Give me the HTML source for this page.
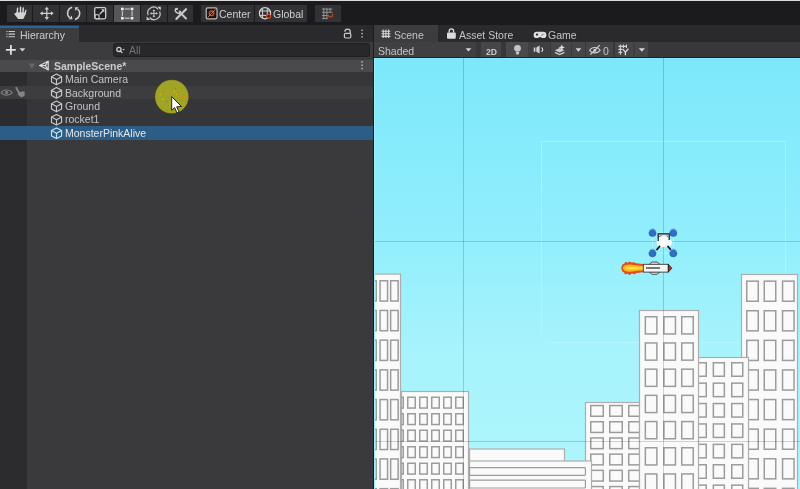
<!DOCTYPE html>
<html><head><meta charset="utf-8">
<style>
*{margin:0;padding:0;box-sizing:border-box}
html,body{width:800px;height:489px;overflow:hidden;background:#1b1a1d;font-family:"Liberation Sans",sans-serif;color:#c4c4c4}
.a{position:absolute}
.tb{position:absolute;top:5px;height:17px;background:#323134}
.tb.on{background:#575659}
.t{position:absolute;white-space:nowrap;font-size:10.5px;line-height:12px;letter-spacing:0;will-change:transform}
svg{position:absolute;overflow:visible}
</style></head><body>
<div class="a" style="left:0;top:0;width:800px;height:1px;background:#dcdcdc"></div>

<!-- ===== main toolbar ===== -->
<div class="tb" style="left:7px;width:25px"></div>
<div class="tb" style="left:33px;width:26px"></div>
<div class="tb" style="left:60px;width:26px"></div>
<div class="tb" style="left:87px;width:26px"></div>
<div class="tb on" style="left:114px;width:26px"></div>
<div class="tb" style="left:141px;width:26px"></div>
<div class="tb" style="left:168px;width:25px"></div>
<div class="tb" style="left:201px;width:53px"></div>
<div class="tb" style="left:255px;width:52px"></div>
<div class="tb" style="left:315px;width:26px"></div>

<svg width="800" height="25" style="left:0;top:0">
<g fill="#d6d6d6" stroke="none">
<!-- hand -->
<path d="M17.2 13 L17.6 8.2 M20.5 12.6 V7.2 M23 12.8 L23.2 8 M24.9 14 L25.8 10.6" stroke="#d4d4d4" stroke-width="1.5" stroke-linecap="round"/>
<path d="M16.4 12.2 L25.4 12.6 L25.6 14.2 L24.2 17.2 L23.2 18.9 L18.2 18.9 L14.6 14.4 C14.2 13.6,14.8 12.8,15.6 13.2Z" fill="#d4d4d4"/>
<!-- move -->
<path d="M46.8 9v9M42 13.35h9.5" stroke="#cfcfcf" stroke-width="1.2"/>
<path d="M46.8 6.8 L49 9.6 H44.6Z M46.8 20 L49 17.1 H44.6Z M39.9 13.35 L42.7 11.2 V15.5Z M53.7 13.35 L50.9 11.2 V15.5Z" fill="#cfcfcf"/>
<!-- rotate -->
<path d="M72.2 7.3 A6 6 0 0 0 69.6 17.6" fill="none" stroke="#cdcdcd" stroke-width="1.5"/>
<path d="M75 19.4 A6 6 0 0 0 77.6 9" fill="none" stroke="#cdcdcd" stroke-width="1.5"/>
<path d="M68.6 19.3 L72.4 19.3 L71.8 15.6Z" fill="#cdcdcd"/>
<path d="M78.6 7.3 L74.8 7.3 L75.4 11Z" fill="#cdcdcd"/>
<!-- scale -->
<rect x="94.7" y="7.6" width="11" height="11.2" rx="1.5" fill="#202020" stroke="#cfcfcf" stroke-width="1.3"/>
<rect x="95.2" y="14.8" width="3.8" height="3.8" fill="#111" stroke="#cfcfcf" stroke-width="1.1"/>
<path d="M99.8 14 L103.6 10.2" stroke="#cfcfcf" stroke-width="1.3"/>
<path d="M104.4 9.3 V12.6 L101.1 9.3Z" fill="#cfcfcf"/>
<!-- rect -->
<g fill="#f0f0f0"><rect x="121" y="7.7" width="2.7" height="2.6"/><rect x="130.7" y="7.7" width="2.7" height="2.6"/><rect x="121" y="16.9" width="2.7" height="2.6"/><rect x="130.7" y="16.9" width="2.7" height="2.6"/></g>
<path d="M124.6 9h5.2M124.6 18.2h5.2M122.35 11.2v4.8M132.05 11.2v4.8" stroke="#d8d8d8" stroke-width="1"/>
<!-- transform -->
<path d="M158.2 9.3 A5.9 5.9 0 0 0 148.2 15.3 M149.6 17.5 A5.9 5.9 0 0 0 159.6 11.5" fill="none" stroke="#c8c8c8" stroke-width="1.2"/>
<path d="M153.9 10.3v6.2M150.8 13.4h6.2" stroke="#c8c8c8" stroke-width="1"/>
<path d="M153.9 9.4 L155.3 11 H152.5Z M153.9 17.4 L155.3 15.8 H152.5Z M149.9 13.4 L151.5 12 V14.8Z M157.9 13.4 L156.3 12 V14.8Z" fill="#c8c8c8"/>
<path d="M160.8 6.8 V10.3 L157.3 6.8Z M146.6 20 V16.5 L150.1 20Z" fill="#d0d0d0"/>
<!-- custom tools -->
<path d="M176.5 18.8 L186 9.2" stroke="#c8c8c8" stroke-width="2.2" stroke-linecap="round"/>
<path d="M175.5 19.8 L176.2 17.5 L177.8 19.1Z" fill="#c8c8c8"/>
<path d="M179.5 12 L186 18.5" stroke="#c8c8c8" stroke-width="2" stroke-linecap="round"/>
<path d="M176.2 8.3 A2.8 2.8 0 0 0 180.7 12.3 M176.5 8 L177.8 9.5 M180.9 12 L179.4 10.7" fill="none" stroke="#c8c8c8" stroke-width="1.4"/>
<!-- center icon -->
<rect x="206.2" y="7.8" width="10.8" height="11" rx="1.6" fill="#1a1412" stroke="#bcbcbc" stroke-width="1.2"/>
<circle cx="211.6" cy="13.3" r="2.3" fill="none" stroke="#d9461f" stroke-width="1.4"/>
<path d="M207.8 17.2 L215.5 9.4" stroke="#c9a080" stroke-width="0.8"/>
<!-- global icon -->
<circle cx="265" cy="13.2" r="5.6" fill="none" stroke="#d8d8d8" stroke-width="1.2"/>
<path d="M259.6 11h10.8M259.6 15.4h10.8M262.6 7.8v10.8M267.3 7.8v10.8" stroke="#cfcfcf" stroke-width="1"/>
<circle cx="268.6" cy="16.2" r="1.9" fill="#2a1a14" stroke="#e14d1f" stroke-width="1.2"/>
<!-- snap grid -->
<path d="M322 9.1h10.4M322 12.3h10.4M322 15.5h5.5M322 18.5h5.5M323.8 7.8v11.4M326.9 7.8v11.4M330 7.8v4.5" stroke="#9a9a9a" stroke-width="0.9"/>
<path d="M328.5 15 A2 2 0 0 0 332.5 15 V13.8" fill="none" stroke="#c8421f" stroke-width="1.2"/>
</g>
</svg>

<div class="t" style="left:219px;top:8px;color:#cfcfcf">Center</div>
<div class="t" style="left:273px;top:8px;color:#cfcfcf">Global</div>
<!-- ===== tab bars ===== -->
<div class="a" style="left:0;top:25px;width:373px;height:17px;background:#2a292c"></div>
<div class="a" style="left:0;top:25px;width:79px;height:17px;background:#3c3b3e"></div>
<div class="a" style="left:0;top:26px;width:79px;height:2px;background:#2d62a0"></div>
<div class="t" style="left:20px;top:29px;color:#cdcdcd">Hierarchy</div>
<div class="a" style="left:374px;top:25px;width:426px;height:17px;background:#2a292c"></div>
<div class="a" style="left:374px;top:25px;width:64px;height:17px;background:#3c3b3e"></div>
<div class="t" style="left:394px;top:29px">Scene</div>
<div class="t" style="left:459px;top:29px">Asset Store</div>
<div class="t" style="left:548px;top:29px">Game</div>

<!-- ===== hierarchy toolbar ===== -->
<div class="a" style="left:0;top:42px;width:373px;height:16px;background:#3c3b3e"></div>
<div class="a" style="left:113px;top:43px;width:257px;height:14px;background:#28272a;border:1px solid #1f1e21;border-top-width:1.5px;border-radius:3px"></div>
<div class="t" style="left:129px;top:44px;color:#727272">All</div>

<!-- ===== hierarchy content ===== -->
<div class="a" style="left:0;top:58px;width:373px;height:431px;background:#3a393c"></div>
<div class="a" style="left:27px;top:72px;width:346px;height:54px;background:#363538"></div>
<div class="a" style="left:0;top:72px;width:27px;height:417px;background:#2c2b2e"></div>
<div class="a" style="left:0;top:59px;width:373px;height:13px;background:#4a494c;border-top:1px solid #3e3d40"></div>
<div class="a" style="left:0;top:86px;width:373px;height:13px;background:#3d3c3f"></div>
<div class="a" style="left:0;top:126px;width:373px;height:14px;background:#2c5d87"></div>
<div class="t" style="left:54px;top:60px;font-weight:bold;color:#cbcbcb">SampleScene*</div>
<div class="t" style="left:65px;top:73.3px">Main Camera</div>
<div class="t" style="left:65px;top:86.5px">Background</div>
<div class="t" style="left:65px;top:99.6px">Ground</div>
<div class="t" style="left:65px;top:113.2px">rocket1</div>
<div class="t" style="left:65px;top:126.6px;color:#e6e6e6">MonsterPinkAlive</div>

<svg width="373" height="150" style="left:0;top:0">
<!-- list icon -->
<g stroke="#c8c8c8" stroke-width="1.1"><path d="M8.5 31.5h6.5M8.5 34.1h6.5M8.5 36.7h6.5"/></g>
<g fill="#c8c8c8"><rect x="6.3" y="31" width="1.2" height="1.1"/><rect x="6.3" y="33.6" width="1.2" height="1.1"/><rect x="6.3" y="36.2" width="1.2" height="1.1"/></g>
<!-- lock -->
<path d="M344.9 31.8 A2.7 2.7 0 0 1 350.3 31.8 V33.6" fill="none" stroke="#c9c9c9" stroke-width="1.2"/>
<rect x="344.4" y="33.4" width="6.4" height="4.6" rx="1.2" fill="none" stroke="#c9c9c9" stroke-width="1.2"/>
<!-- kebab tab -->
<g fill="#c4c4c4"><rect x="361.4" y="29.6" width="1.4" height="1.4"/><rect x="361.4" y="32.9" width="1.4" height="1.4"/><rect x="361.4" y="36.2" width="1.4" height="1.4"/></g>
<!-- plus -->
<path d="M10.9 45v9.8M5.9 49.9h9.9" stroke="#e0e0e0" stroke-width="1.8"/>
<path d="M19.4 48.2 H25.4 L22.4 51.6Z" fill="#d0d0d0"/>
<!-- search icon -->
<circle cx="118.9" cy="49.4" r="2.1" fill="none" stroke="#cfcfcf" stroke-width="1.3"/>
<path d="M120.4 51 L122.4 53.2" stroke="#cfcfcf" stroke-width="1.2"/>
<path d="M122.4 49 H124.8 L123.6 50.6Z" fill="#cfcfcf"/>
<!-- foldout -->
<path d="M28.6 63.6 H35.2 L31.9 69Z" fill="#666569"/>
<!-- unity logo -->
<g fill="none" stroke="#dedede" stroke-width="1.2" stroke-linejoin="round">
<path d="M39.6 65.5 L48.2 61.2 L48.2 69.8Z"/>
<path d="M45.3 65.5 L39.6 65.5 M45.3 65.5 L48.2 61.2 M45.3 65.5 L48.2 69.8"/>
</g>
<!-- kebab row -->
<g fill="#c4c4c4"><rect x="361.4" y="61.2" width="1.4" height="1.4"/><rect x="361.4" y="64.5" width="1.4" height="1.4"/><rect x="361.4" y="67.8" width="1.4" height="1.4"/></g>
<!-- cubes -->
<defs><g id="cube"><path d="M5.5 0.6 L10.6 3.3 V8.6 L5.5 11.3 L0.5 8.6 V3.3Z M0.5 3.3 L5.5 6 L10.6 3.3 M5.5 6 V11.3" fill="none" stroke="#c8c8c8" stroke-width="1.15" stroke-linejoin="round"/></g>
<g id="cubeS"><path d="M5.5 0.6 L10.6 3.3 V8.6 L5.5 11.3 L0.5 8.6 V3.3Z M0.5 3.3 L5.5 6 L10.6 3.3 M5.5 6 V11.3" fill="none" stroke="#bfe6f5" stroke-width="1.15" stroke-linejoin="round"/></g></defs>
<use href="#cube" x="51" y="73.5"/>
<use href="#cube" x="51" y="87"/>
<use href="#cube" x="51" y="100.5"/>
<use href="#cube" x="51" y="113.8"/>
<use href="#cubeS" x="51" y="127.3"/>
<!-- eye -->
<path d="M1.2 92.6 C3.5 89.2,9.7 89.2,12.2 92.6 C9.7 96,3.5 96,1.2 92.6Z" fill="none" stroke="#7b7a7d" stroke-width="1.1"/>
<circle cx="6.6" cy="92.4" r="1.7" fill="#7b7a7d"/>
<!-- hand pointer -->
<path d="M16.2 87.8 L19.4 93.5" stroke="#858487" stroke-width="1.8" stroke-linecap="round"/>
<path d="M18.6 92 L24.6 91.2 L24.6 95.6 L22.2 97.2 L19.8 96.6 L17.6 94.2Z" fill="#858487"/>
</svg>
<!-- cursor highlight -->
<svg width="40" height="40" style="left:152px;top:77px">
<circle cx="19.8" cy="19.7" r="16.9" fill="#9fa425" stroke="rgba(90,50,30,0.45)" stroke-width="0.7"/>
<g><circle cx="8.3" cy="17.5" r="0.65" fill="#f5c020"/><circle cx="14.5" cy="16.3" r="0.65" fill="#f08a1a"/><circle cx="16.3" cy="15.5" r="0.65" fill="#f08a1a"/><circle cx="22.4" cy="14.5" r="0.65" fill="#f5c020"/><circle cx="23.4" cy="11.4" r="0.65" fill="#e0501a"/><circle cx="27.4" cy="13.2" r="0.65" fill="#f08a1a"/><circle cx="29.4" cy="16.3" r="0.65" fill="#f08a1a"/><circle cx="31.4" cy="15.5" r="0.65" fill="#f08a1a"/><circle cx="24.3" cy="17.5" r="0.65" fill="#f5c020"/><circle cx="28.6" cy="19.4" r="0.65" fill="#f08a1a"/><circle cx="32.3" cy="19.4" r="0.65" fill="#f08a1a"/><circle cx="32.3" cy="22.4" r="0.65" fill="#f08a1a"/><circle cx="10.8" cy="22.4" r="0.65" fill="#f5c020"/><circle cx="13.6" cy="20.6" r="0.65" fill="#f08a1a"/><circle cx="15.1" cy="24.3" r="0.65" fill="#e0501a"/></g>
<path d="M19.7 19.7 V33.2 L22.6 30.6 L25 36 L27 35 L24.7 29.8 L29.4 29.4Z" fill="#ffffff" stroke="#111" stroke-width="0.9" stroke-linejoin="round"/>
</svg>

<!-- ===== scene toolbar ===== -->
<div class="a" style="left:374px;top:42px;width:426px;height:16px;background:#383739"></div>
<div class="a" style="left:374px;top:42px;width:102px;height:15px;background:#403f42"></div>
<div class="a" style="left:481px;top:42px;width:20px;height:15px;background:#464548"></div>
<div class="a" style="left:506px;top:42px;width:22px;height:15px;background:#4a494c"></div>
<div class="a" style="left:528px;top:42px;width:22px;height:15px;background:#3f3e41"></div>
<div class="a" style="left:551px;top:42px;width:34px;height:15px;background:#464548"></div>
<div class="a" style="left:586px;top:42px;width:27px;height:15px;background:#464548"></div>
<div class="a" style="left:615px;top:42px;width:33px;height:15px;background:#464548"></div>
<div class="a" style="left:374px;top:57px;width:426px;height:1px;background:#232225"></div>
<div class="t" style="left:378px;top:45px">Shaded</div>
<div class="t" style="left:485.5px;top:46px;font-size:8.6px;font-weight:bold;color:#cacaca">2D</div>
<div class="t" style="left:603px;top:45px">0</div>
<svg width="426" height="40" style="left:374px;top:24px">
<g transform="translate(-374,-24)">
<!-- scene tab grid icon -->
<path d="M381.6 31.2h8.8M381.6 33.8h8.8M381.6 36.4h8.8M383.2 29.6v8.4M385.9 29.6v8.4M388.6 29.6v8.4" stroke="#d8d8d8" stroke-width="1.1"/>
<!-- bag -->
<path d="M449.2 32.6 V31 A2.2 2.2 0 0 1 453.6 31 V32.6" fill="none" stroke="#dcdcdc" stroke-width="1.3"/>
<rect x="447" y="32.4" width="8.8" height="6.4" rx="1" fill="#dcdcdc"/>
<!-- gamepad -->
<path d="M536.8 31.7 H543.2 A3.2 3.2 0 0 1 543.2 38.1 C541.5 38.1,541 37,540 37 C539 37,538.5 38.1,536.8 38.1 A3.2 3.2 0 0 1 536.8 31.7Z" fill="#dedede"/>
<circle cx="537" cy="34.6" r="1.1" fill="#222"/>
<path d="M541.6 35.8 L543.6 33.8" stroke="#555" stroke-width="0.9"/>
<!-- shaded dropdown -->
<path d="M465.6 48.3 H471.4 L468.5 51.6Z" fill="#d6d6d6"/>
<!-- bulb -->
<circle cx="517.5" cy="48.3" r="3.4" fill="#c4c4c4"/>
<path d="M515.6 52 H519.4 L518.6 54.5 H516.4Z" fill="#c8c8c8"/>
<!-- audio -->
<path d="M533.7 47.5 H535.4 V51.7 H533.7Z M536.3 47.5 L539.6 45.6 V53.6 L536.3 51.7Z" fill="#d2d2d2"/>
<path d="M541.6 47.4 A3.2 3.2 0 0 1 541.6 51.9" fill="none" stroke="#d2d2d2" stroke-width="1.1"/>
<!-- effects -->
<path d="M555 50.2 L559.6 48 L564.4 50.2 L559.6 52.4Z" fill="#cfcfcf"/>
<path d="M555 52.4 L559.6 54.6 L564.4 52.4" fill="none" stroke="#cfcfcf" stroke-width="1.2"/>
<path d="M561.8 44.4 L562.7 46.6 L565 47.4 L562.7 48.2 L561.8 50.4 L560.9 48.2 L558.6 47.4 L560.9 46.6Z" fill="#dedede"/>
<path d="M571.5 43.5 V56.5" stroke="#383739" stroke-width="1"/>
<path d="M575.6 48.2 H581.3 L578.45 51.8Z" fill="#d6d6d6"/>
<!-- hidden eye -->
<path d="M589.6 50.2 C591.8 46.6,597.8 46.6,600.2 50.2 C597.8 53.8,591.8 53.8,589.6 50.2Z" fill="none" stroke="#d0d0d0" stroke-width="1.1"/>
<circle cx="594.9" cy="50.2" r="1.5" fill="#d0d0d0"/>
<path d="M590.4 54.6 L599.8 45.2" stroke="#d0d0d0" stroke-width="1.2"/>
<!-- gizmos -->
<path d="M618.4 46.4h8.4M618.4 49.4h3.8M618.4 52.4h3.8M620.4 44.4v10.4M623.4 44.4v3.6M626.4 44.4v3.6M620.4 54.8" stroke="#d4d4d4" stroke-width="1.1"/>
<path d="M622.6 48.8 L625.4 52.2 L628.4 48.8 M625.4 52.2 V55.2" fill="none" stroke="#dadada" stroke-width="1.3"/>
<path d="M634 43.5 V56.5" stroke="#383739" stroke-width="1"/>
<path d="M638.8 48.2 H645 L641.9 51.8Z" fill="#d6d6d6"/>
</g>
</svg>

<!-- ===== viewport ===== -->
<div class="a" style="left:374px;top:58px;width:426px;height:431px;background:linear-gradient(#7de8fb 0%,#90eefc 40%,#a8f4fc 70%,#adf5fc 100%);overflow:hidden">
<svg width="800" height="489" viewBox="0 0 800 489" style="left:-374px;top:-58px">
<!--CAMFRAME-->
<g stroke="rgba(200,250,255,0.45)" stroke-width="1" fill="none"><path d="M541.5 141.5H786M541.5 141.5V334M785.5 141.5V342.5M550 342.5H786"/></g>
<rect x="741.5" y="274.5" width="56" height="220" fill="#fafafa" stroke="#adadad" stroke-width="1.2"/>
<rect x="746.75" y="281.15" width="11.50" height="20.10" fill="none" stroke="#9c9c9c" stroke-width="1.5"/>
<rect x="746.75" y="310.75" width="11.50" height="20.10" fill="none" stroke="#9c9c9c" stroke-width="1.5"/>
<rect x="746.75" y="340.35" width="11.50" height="20.10" fill="none" stroke="#9c9c9c" stroke-width="1.5"/>
<rect x="746.75" y="369.95" width="11.50" height="20.10" fill="none" stroke="#9c9c9c" stroke-width="1.5"/>
<rect x="746.75" y="399.55" width="11.50" height="20.10" fill="none" stroke="#9c9c9c" stroke-width="1.5"/>
<rect x="746.75" y="429.15" width="11.50" height="20.10" fill="none" stroke="#9c9c9c" stroke-width="1.5"/>
<rect x="746.75" y="458.75" width="11.50" height="20.10" fill="none" stroke="#9c9c9c" stroke-width="1.5"/>
<rect x="746.75" y="488.35" width="11.50" height="20.10" fill="none" stroke="#9c9c9c" stroke-width="1.5"/>
<rect x="764.25" y="281.15" width="11.50" height="20.10" fill="none" stroke="#9c9c9c" stroke-width="1.5"/>
<rect x="764.25" y="310.75" width="11.50" height="20.10" fill="none" stroke="#9c9c9c" stroke-width="1.5"/>
<rect x="764.25" y="340.35" width="11.50" height="20.10" fill="none" stroke="#9c9c9c" stroke-width="1.5"/>
<rect x="764.25" y="369.95" width="11.50" height="20.10" fill="none" stroke="#9c9c9c" stroke-width="1.5"/>
<rect x="764.25" y="399.55" width="11.50" height="20.10" fill="none" stroke="#9c9c9c" stroke-width="1.5"/>
<rect x="764.25" y="429.15" width="11.50" height="20.10" fill="none" stroke="#9c9c9c" stroke-width="1.5"/>
<rect x="764.25" y="458.75" width="11.50" height="20.10" fill="none" stroke="#9c9c9c" stroke-width="1.5"/>
<rect x="764.25" y="488.35" width="11.50" height="20.10" fill="none" stroke="#9c9c9c" stroke-width="1.5"/>
<rect x="782.55" y="281.15" width="11.50" height="20.10" fill="none" stroke="#9c9c9c" stroke-width="1.5"/>
<rect x="782.55" y="310.75" width="11.50" height="20.10" fill="none" stroke="#9c9c9c" stroke-width="1.5"/>
<rect x="782.55" y="340.35" width="11.50" height="20.10" fill="none" stroke="#9c9c9c" stroke-width="1.5"/>
<rect x="782.55" y="369.95" width="11.50" height="20.10" fill="none" stroke="#9c9c9c" stroke-width="1.5"/>
<rect x="782.55" y="399.55" width="11.50" height="20.10" fill="none" stroke="#9c9c9c" stroke-width="1.5"/>
<rect x="782.55" y="429.15" width="11.50" height="20.10" fill="none" stroke="#9c9c9c" stroke-width="1.5"/>
<rect x="782.55" y="458.75" width="11.50" height="20.10" fill="none" stroke="#9c9c9c" stroke-width="1.5"/>
<rect x="782.55" y="488.35" width="11.50" height="20.10" fill="none" stroke="#9c9c9c" stroke-width="1.5"/>
<g>
<rect x="690.5" y="357.5" width="58" height="137" fill="#fafafa" stroke="#adadad" stroke-width="1.2"/>
<rect x="695.25" y="362.75" width="11.00" height="13.50" fill="none" stroke="#9c9c9c" stroke-width="1.5"/>
<rect x="695.25" y="383.15" width="11.00" height="13.50" fill="none" stroke="#9c9c9c" stroke-width="1.5"/>
<rect x="695.25" y="403.55" width="11.00" height="13.50" fill="none" stroke="#9c9c9c" stroke-width="1.5"/>
<rect x="695.25" y="423.95" width="11.00" height="13.50" fill="none" stroke="#9c9c9c" stroke-width="1.5"/>
<rect x="695.25" y="444.35" width="11.00" height="13.50" fill="none" stroke="#9c9c9c" stroke-width="1.5"/>
<rect x="695.25" y="464.75" width="11.00" height="13.50" fill="none" stroke="#9c9c9c" stroke-width="1.5"/>
<rect x="695.25" y="485.15" width="11.00" height="13.50" fill="none" stroke="#9c9c9c" stroke-width="1.5"/>
<rect x="713.35" y="362.75" width="11.00" height="13.50" fill="none" stroke="#9c9c9c" stroke-width="1.5"/>
<rect x="713.35" y="383.15" width="11.00" height="13.50" fill="none" stroke="#9c9c9c" stroke-width="1.5"/>
<rect x="713.35" y="403.55" width="11.00" height="13.50" fill="none" stroke="#9c9c9c" stroke-width="1.5"/>
<rect x="713.35" y="423.95" width="11.00" height="13.50" fill="none" stroke="#9c9c9c" stroke-width="1.5"/>
<rect x="713.35" y="444.35" width="11.00" height="13.50" fill="none" stroke="#9c9c9c" stroke-width="1.5"/>
<rect x="713.35" y="464.75" width="11.00" height="13.50" fill="none" stroke="#9c9c9c" stroke-width="1.5"/>
<rect x="713.35" y="485.15" width="11.00" height="13.50" fill="none" stroke="#9c9c9c" stroke-width="1.5"/>
<rect x="731.75" y="362.75" width="11.00" height="13.50" fill="none" stroke="#9c9c9c" stroke-width="1.5"/>
<rect x="731.75" y="383.15" width="11.00" height="13.50" fill="none" stroke="#9c9c9c" stroke-width="1.5"/>
<rect x="731.75" y="403.55" width="11.00" height="13.50" fill="none" stroke="#9c9c9c" stroke-width="1.5"/>
<rect x="731.75" y="423.95" width="11.00" height="13.50" fill="none" stroke="#9c9c9c" stroke-width="1.5"/>
<rect x="731.75" y="444.35" width="11.00" height="13.50" fill="none" stroke="#9c9c9c" stroke-width="1.5"/>
<rect x="731.75" y="464.75" width="11.00" height="13.50" fill="none" stroke="#9c9c9c" stroke-width="1.5"/>
<rect x="731.75" y="485.15" width="11.00" height="13.50" fill="none" stroke="#9c9c9c" stroke-width="1.5"/>
</g>
<rect x="585.5" y="402.5" width="54" height="92" fill="#fafafa" stroke="#adadad" stroke-width="1.2"/>
<rect x="590.75" y="405.55" width="12.50" height="10.70" fill="none" stroke="#9c9c9c" stroke-width="1.5"/>
<rect x="590.75" y="421.75" width="12.50" height="10.70" fill="none" stroke="#9c9c9c" stroke-width="1.5"/>
<rect x="590.75" y="437.95" width="12.50" height="10.70" fill="none" stroke="#9c9c9c" stroke-width="1.5"/>
<rect x="590.75" y="454.15" width="12.50" height="10.70" fill="none" stroke="#9c9c9c" stroke-width="1.5"/>
<rect x="590.75" y="470.35" width="12.50" height="10.70" fill="none" stroke="#9c9c9c" stroke-width="1.5"/>
<rect x="590.75" y="486.55" width="12.50" height="10.70" fill="none" stroke="#9c9c9c" stroke-width="1.5"/>
<rect x="609.75" y="405.55" width="12.50" height="10.70" fill="none" stroke="#9c9c9c" stroke-width="1.5"/>
<rect x="609.75" y="421.75" width="12.50" height="10.70" fill="none" stroke="#9c9c9c" stroke-width="1.5"/>
<rect x="609.75" y="437.95" width="12.50" height="10.70" fill="none" stroke="#9c9c9c" stroke-width="1.5"/>
<rect x="609.75" y="454.15" width="12.50" height="10.70" fill="none" stroke="#9c9c9c" stroke-width="1.5"/>
<rect x="609.75" y="470.35" width="12.50" height="10.70" fill="none" stroke="#9c9c9c" stroke-width="1.5"/>
<rect x="609.75" y="486.55" width="12.50" height="10.70" fill="none" stroke="#9c9c9c" stroke-width="1.5"/>
<rect x="628.75" y="405.55" width="12.50" height="10.70" fill="none" stroke="#9c9c9c" stroke-width="1.5"/>
<rect x="628.75" y="421.75" width="12.50" height="10.70" fill="none" stroke="#9c9c9c" stroke-width="1.5"/>
<rect x="628.75" y="437.95" width="12.50" height="10.70" fill="none" stroke="#9c9c9c" stroke-width="1.5"/>
<rect x="628.75" y="454.15" width="12.50" height="10.70" fill="none" stroke="#9c9c9c" stroke-width="1.5"/>
<rect x="628.75" y="470.35" width="12.50" height="10.70" fill="none" stroke="#9c9c9c" stroke-width="1.5"/>
<rect x="628.75" y="486.55" width="12.50" height="10.70" fill="none" stroke="#9c9c9c" stroke-width="1.5"/>
<rect x="639.5" y="310.5" width="59" height="184" fill="#fafafa" stroke="#adadad" stroke-width="1.2"/>
<rect x="645.35" y="316.75" width="11.50" height="17.20" fill="none" stroke="#9c9c9c" stroke-width="1.5"/>
<rect x="645.35" y="342.95" width="11.50" height="17.20" fill="none" stroke="#9c9c9c" stroke-width="1.5"/>
<rect x="645.35" y="369.15" width="11.50" height="17.20" fill="none" stroke="#9c9c9c" stroke-width="1.5"/>
<rect x="645.35" y="395.35" width="11.50" height="17.20" fill="none" stroke="#9c9c9c" stroke-width="1.5"/>
<rect x="645.35" y="421.55" width="11.50" height="17.20" fill="none" stroke="#9c9c9c" stroke-width="1.5"/>
<rect x="645.35" y="447.75" width="11.50" height="17.20" fill="none" stroke="#9c9c9c" stroke-width="1.5"/>
<rect x="645.35" y="473.95" width="11.50" height="17.20" fill="none" stroke="#9c9c9c" stroke-width="1.5"/>
<rect x="663.95" y="316.75" width="11.50" height="17.20" fill="none" stroke="#9c9c9c" stroke-width="1.5"/>
<rect x="663.95" y="342.95" width="11.50" height="17.20" fill="none" stroke="#9c9c9c" stroke-width="1.5"/>
<rect x="663.95" y="369.15" width="11.50" height="17.20" fill="none" stroke="#9c9c9c" stroke-width="1.5"/>
<rect x="663.95" y="395.35" width="11.50" height="17.20" fill="none" stroke="#9c9c9c" stroke-width="1.5"/>
<rect x="663.95" y="421.55" width="11.50" height="17.20" fill="none" stroke="#9c9c9c" stroke-width="1.5"/>
<rect x="663.95" y="447.75" width="11.50" height="17.20" fill="none" stroke="#9c9c9c" stroke-width="1.5"/>
<rect x="663.95" y="473.95" width="11.50" height="17.20" fill="none" stroke="#9c9c9c" stroke-width="1.5"/>
<rect x="681.75" y="316.75" width="11.50" height="17.20" fill="none" stroke="#9c9c9c" stroke-width="1.5"/>
<rect x="681.75" y="342.95" width="11.50" height="17.20" fill="none" stroke="#9c9c9c" stroke-width="1.5"/>
<rect x="681.75" y="369.15" width="11.50" height="17.20" fill="none" stroke="#9c9c9c" stroke-width="1.5"/>
<rect x="681.75" y="395.35" width="11.50" height="17.20" fill="none" stroke="#9c9c9c" stroke-width="1.5"/>
<rect x="681.75" y="421.55" width="11.50" height="17.20" fill="none" stroke="#9c9c9c" stroke-width="1.5"/>
<rect x="681.75" y="447.75" width="11.50" height="17.20" fill="none" stroke="#9c9c9c" stroke-width="1.5"/>
<rect x="681.75" y="473.95" width="11.50" height="17.20" fill="none" stroke="#9c9c9c" stroke-width="1.5"/>
<rect x="401.5" y="391.5" width="67" height="103" fill="#fafafa" stroke="#adadad" stroke-width="1.2"/>
<rect x="395.75" y="397.25" width="7.50" height="10.80" fill="none" stroke="#9c9c9c" stroke-width="1.5"/>
<rect x="395.75" y="413.75" width="7.50" height="10.80" fill="none" stroke="#9c9c9c" stroke-width="1.5"/>
<rect x="395.75" y="430.25" width="7.50" height="10.80" fill="none" stroke="#9c9c9c" stroke-width="1.5"/>
<rect x="395.75" y="446.75" width="7.50" height="10.80" fill="none" stroke="#9c9c9c" stroke-width="1.5"/>
<rect x="395.75" y="463.25" width="7.50" height="10.80" fill="none" stroke="#9c9c9c" stroke-width="1.5"/>
<rect x="395.75" y="479.75" width="7.50" height="10.80" fill="none" stroke="#9c9c9c" stroke-width="1.5"/>
<rect x="407.75" y="397.25" width="7.50" height="10.80" fill="none" stroke="#9c9c9c" stroke-width="1.5"/>
<rect x="407.75" y="413.75" width="7.50" height="10.80" fill="none" stroke="#9c9c9c" stroke-width="1.5"/>
<rect x="407.75" y="430.25" width="7.50" height="10.80" fill="none" stroke="#9c9c9c" stroke-width="1.5"/>
<rect x="407.75" y="446.75" width="7.50" height="10.80" fill="none" stroke="#9c9c9c" stroke-width="1.5"/>
<rect x="407.75" y="463.25" width="7.50" height="10.80" fill="none" stroke="#9c9c9c" stroke-width="1.5"/>
<rect x="407.75" y="479.75" width="7.50" height="10.80" fill="none" stroke="#9c9c9c" stroke-width="1.5"/>
<rect x="419.75" y="397.25" width="7.50" height="10.80" fill="none" stroke="#9c9c9c" stroke-width="1.5"/>
<rect x="419.75" y="413.75" width="7.50" height="10.80" fill="none" stroke="#9c9c9c" stroke-width="1.5"/>
<rect x="419.75" y="430.25" width="7.50" height="10.80" fill="none" stroke="#9c9c9c" stroke-width="1.5"/>
<rect x="419.75" y="446.75" width="7.50" height="10.80" fill="none" stroke="#9c9c9c" stroke-width="1.5"/>
<rect x="419.75" y="463.25" width="7.50" height="10.80" fill="none" stroke="#9c9c9c" stroke-width="1.5"/>
<rect x="419.75" y="479.75" width="7.50" height="10.80" fill="none" stroke="#9c9c9c" stroke-width="1.5"/>
<rect x="431.75" y="397.25" width="7.50" height="10.80" fill="none" stroke="#9c9c9c" stroke-width="1.5"/>
<rect x="431.75" y="413.75" width="7.50" height="10.80" fill="none" stroke="#9c9c9c" stroke-width="1.5"/>
<rect x="431.75" y="430.25" width="7.50" height="10.80" fill="none" stroke="#9c9c9c" stroke-width="1.5"/>
<rect x="431.75" y="446.75" width="7.50" height="10.80" fill="none" stroke="#9c9c9c" stroke-width="1.5"/>
<rect x="431.75" y="463.25" width="7.50" height="10.80" fill="none" stroke="#9c9c9c" stroke-width="1.5"/>
<rect x="431.75" y="479.75" width="7.50" height="10.80" fill="none" stroke="#9c9c9c" stroke-width="1.5"/>
<rect x="443.75" y="397.25" width="7.50" height="10.80" fill="none" stroke="#9c9c9c" stroke-width="1.5"/>
<rect x="443.75" y="413.75" width="7.50" height="10.80" fill="none" stroke="#9c9c9c" stroke-width="1.5"/>
<rect x="443.75" y="430.25" width="7.50" height="10.80" fill="none" stroke="#9c9c9c" stroke-width="1.5"/>
<rect x="443.75" y="446.75" width="7.50" height="10.80" fill="none" stroke="#9c9c9c" stroke-width="1.5"/>
<rect x="443.75" y="463.25" width="7.50" height="10.80" fill="none" stroke="#9c9c9c" stroke-width="1.5"/>
<rect x="443.75" y="479.75" width="7.50" height="10.80" fill="none" stroke="#9c9c9c" stroke-width="1.5"/>
<rect x="455.75" y="397.25" width="7.50" height="10.80" fill="none" stroke="#9c9c9c" stroke-width="1.5"/>
<rect x="455.75" y="413.75" width="7.50" height="10.80" fill="none" stroke="#9c9c9c" stroke-width="1.5"/>
<rect x="455.75" y="430.25" width="7.50" height="10.80" fill="none" stroke="#9c9c9c" stroke-width="1.5"/>
<rect x="455.75" y="446.75" width="7.50" height="10.80" fill="none" stroke="#9c9c9c" stroke-width="1.5"/>
<rect x="455.75" y="463.25" width="7.50" height="10.80" fill="none" stroke="#9c9c9c" stroke-width="1.5"/>
<rect x="455.75" y="479.75" width="7.50" height="10.80" fill="none" stroke="#9c9c9c" stroke-width="1.5"/>
<rect x="469.5" y="449.0" width="95" height="45.5" fill="#fafafa" stroke="#adadad" stroke-width="1.2"/>
<rect x="469.5" y="461.0" width="122" height="33.5" fill="#fafafa" stroke="#adadad" stroke-width="1.2"/>
<rect x="469.5" y="467.6" width="115.9" height="7.8" rx="0.8" fill="none" stroke="#9c9c9c" stroke-width="1.2"/>
<rect x="469.5" y="480.20000000000005" width="115.9" height="7.8" rx="0.8" fill="none" stroke="#9c9c9c" stroke-width="1.2"/>
<rect x="360.5" y="274.1" width="40" height="220.39999999999998" fill="#fafafa" stroke="#adadad" stroke-width="1.2"/>
<rect x="368.75" y="280.75" width="7.50" height="20.30" fill="none" stroke="#9c9c9c" stroke-width="1.5"/>
<rect x="368.75" y="310.45" width="7.50" height="20.30" fill="none" stroke="#9c9c9c" stroke-width="1.5"/>
<rect x="368.75" y="340.15" width="7.50" height="20.30" fill="none" stroke="#9c9c9c" stroke-width="1.5"/>
<rect x="368.75" y="369.85" width="7.50" height="20.30" fill="none" stroke="#9c9c9c" stroke-width="1.5"/>
<rect x="368.75" y="399.55" width="7.50" height="20.30" fill="none" stroke="#9c9c9c" stroke-width="1.5"/>
<rect x="368.75" y="429.25" width="7.50" height="20.30" fill="none" stroke="#9c9c9c" stroke-width="1.5"/>
<rect x="368.75" y="458.95" width="7.50" height="20.30" fill="none" stroke="#9c9c9c" stroke-width="1.5"/>
<rect x="368.75" y="488.65" width="7.50" height="20.30" fill="none" stroke="#9c9c9c" stroke-width="1.5"/>
<rect x="380.05" y="280.75" width="7.50" height="20.30" fill="none" stroke="#9c9c9c" stroke-width="1.5"/>
<rect x="380.05" y="310.45" width="7.50" height="20.30" fill="none" stroke="#9c9c9c" stroke-width="1.5"/>
<rect x="380.05" y="340.15" width="7.50" height="20.30" fill="none" stroke="#9c9c9c" stroke-width="1.5"/>
<rect x="380.05" y="369.85" width="7.50" height="20.30" fill="none" stroke="#9c9c9c" stroke-width="1.5"/>
<rect x="380.05" y="399.55" width="7.50" height="20.30" fill="none" stroke="#9c9c9c" stroke-width="1.5"/>
<rect x="380.05" y="429.25" width="7.50" height="20.30" fill="none" stroke="#9c9c9c" stroke-width="1.5"/>
<rect x="380.05" y="458.95" width="7.50" height="20.30" fill="none" stroke="#9c9c9c" stroke-width="1.5"/>
<rect x="380.05" y="488.65" width="7.50" height="20.30" fill="none" stroke="#9c9c9c" stroke-width="1.5"/>
<rect x="390.65" y="280.75" width="7.50" height="20.30" fill="none" stroke="#9c9c9c" stroke-width="1.5"/>
<rect x="390.65" y="310.45" width="7.50" height="20.30" fill="none" stroke="#9c9c9c" stroke-width="1.5"/>
<rect x="390.65" y="340.15" width="7.50" height="20.30" fill="none" stroke="#9c9c9c" stroke-width="1.5"/>
<rect x="390.65" y="369.85" width="7.50" height="20.30" fill="none" stroke="#9c9c9c" stroke-width="1.5"/>
<rect x="390.65" y="399.55" width="7.50" height="20.30" fill="none" stroke="#9c9c9c" stroke-width="1.5"/>
<rect x="390.65" y="429.25" width="7.50" height="20.30" fill="none" stroke="#9c9c9c" stroke-width="1.5"/>
<rect x="390.65" y="458.95" width="7.50" height="20.30" fill="none" stroke="#9c9c9c" stroke-width="1.5"/>
<rect x="390.65" y="488.65" width="7.50" height="20.30" fill="none" stroke="#9c9c9c" stroke-width="1.5"/>
<g stroke="rgba(20,40,50,0.2)" stroke-width="1"><path d="M463.5 58V489M663.5 58V489M374 241.5H800M374 441.5H800"/></g>
<!-- rocket -->
<g>
<path d="M621.2 268 L622.4 264.6 L624.2 263.8 L625.4 261.8 L627.6 262.8 L629.4 261.4 L631.6 262.6 L634 262.2 L636 263.2 L639 263.4 L643.5 264.2 V272 L639.5 272.8 L636.5 273 L634.5 274.2 L632 273.6 L629.5 275 L627.4 273.8 L625.2 274.6 L624 272.6 L622.2 271.6Z" fill="#e64b1c"/>
<path d="M622.8 268 L624 265.8 L626.5 265 L629 264.4 L632 264.8 L636 265.2 L640 265.8 L643.5 266 V270.4 L640 270.6 L636 271 L632 271.4 L629 271.8 L626.5 271.2 L624 270.4Z" fill="#fcb91c"/>
<path d="M624.5 268 L627 266.8 L632 267 L638 267.4 L643.5 267.6 V268.8 L638 269 L632 269.4 L627 269.3Z" fill="#ffe14a"/>
<path d="M649 264.5 L652 262 H657 L660 264.5Z" fill="#e0e0e0" stroke="#333" stroke-width="0.8"/>
<path d="M649 271.8 L652 274.3 H657 L660 271.8Z" fill="#e0e0e0" stroke="#333" stroke-width="0.8"/>
<rect x="643.3" y="264.3" width="25" height="7.8" fill="#f4f4f4" stroke="#3a3a3a" stroke-width="0.9"/>
<path d="M668.3 264.3 L671.8 268.2 L668.3 272.1Z" fill="#d12a1a" stroke="#222" stroke-width="0.9"/>
<path d="M646 268 H660" stroke="#333" stroke-width="1.3"/>
</g>
<!-- monster -->
<g>
<path d="M652.5 233 H673.3 V253.3 H652.5Z" fill="none" stroke="rgba(255,255,255,0.35)" stroke-width="0.8"/>
<rect x="658.2" y="233.8" width="11" height="8.5" fill="#dfe6ec"/>
<path d="M656.8 240.5 C656.5 237.5,659 236.5,661 237 C663 235.5,667 236,668.5 238.5 C671 239,673 242,672 244 C671 246.5,669 247,667.5 247 H660 C657.5 247,656 244,656.8 240.5Z" fill="#f5f7f9"/>
<circle cx="663.5" cy="243" r="2.8" fill="#ffffff"/>
<path d="M658.2 241 V233.8 H669.2 V240" fill="none" stroke="#151515" stroke-width="1.2"/>
<path d="M660 236.5 L661.5 235 M666.5 235.5 L668 236.5" stroke="#444" stroke-width="0.8"/>
<circle cx="659.6" cy="236.5" r="0.6" fill="#d0302a"/><circle cx="667.6" cy="236.5" r="0.6" fill="#e07030"/>
<path d="M659.5 246.5 L657 249.5 M668 246.5 L670.5 249.5" stroke="#111" stroke-width="1.8" stroke-linecap="round"/>
<g fill="#2c6fc4" stroke="#1d58a6" stroke-width="0.5">
<circle cx="652.5" cy="233" r="3.6"/><circle cx="673.3" cy="233" r="3.6"/>
<circle cx="652.5" cy="253.3" r="3.6"/><circle cx="673.3" cy="253.3" r="3.6"/>
</g>
<g fill="none" stroke="#7fb0ea" stroke-width="0.8">
<path d="M649.5 231.5 A3 3 0 0 1 655.5 231.5"/><path d="M670.3 231.5 A3 3 0 0 1 676.3 231.5"/>
<path d="M649.5 251.8 A3 3 0 0 1 655.5 251.8"/><path d="M670.3 251.8 A3 3 0 0 1 676.3 251.8"/>
</g>
</g>

<rect x="374" y="58" width="1" height="431" fill="#9eeffc"/>
</svg></div>
</body></html>
